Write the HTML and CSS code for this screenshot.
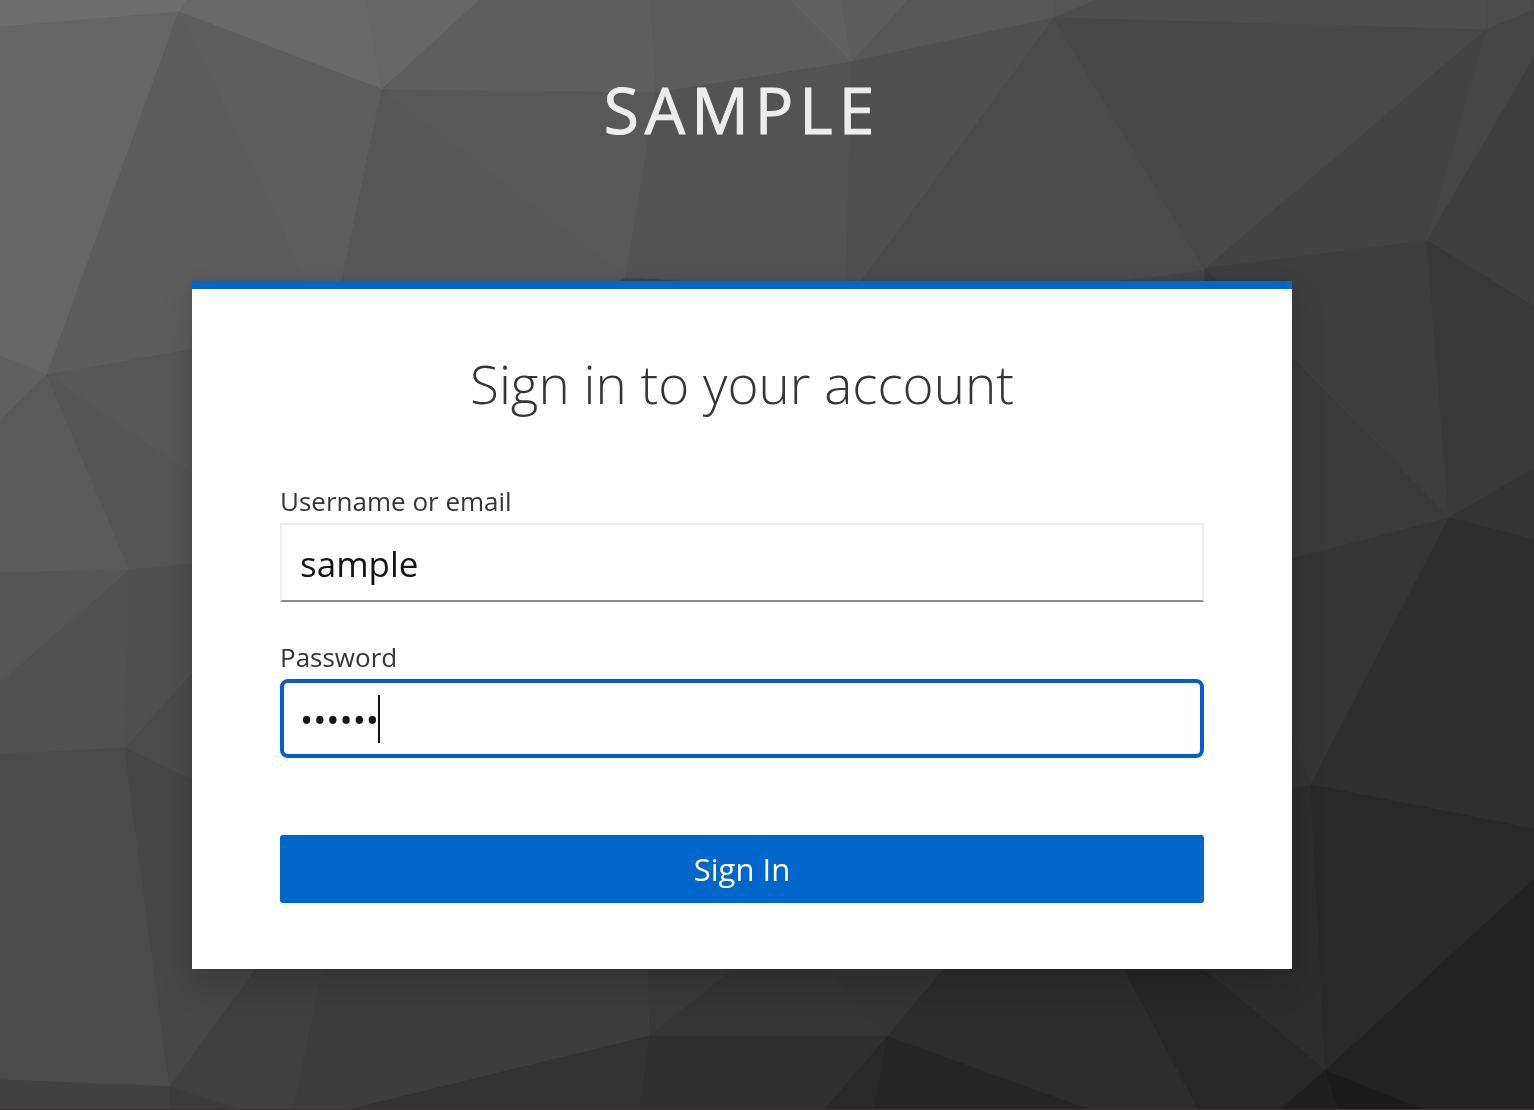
FILE: index.html
```html
<!DOCTYPE html>
<html lang="en">
<head>
<meta charset="utf-8">
<meta name="viewport" content="width=device-width, initial-scale=1">
<title>Sign in to your account</title>
<link rel="stylesheet" href="styles.css">
</head>
<body>
<svg class="mesh" viewBox="0 0 1534 1110" preserveAspectRatio="xMidYMid slice" aria-hidden="true">
  <!-- top edge -->
  <polygon color="#6e6e6e" points="0,0 187,0 179,12 0,27"/>
  <polygon color="#686868" points="187,0 366,0 382,89 179,12"/>
  <polygon color="#666666" points="366,0 480,0 382,89"/>
  <polygon color="#5f5f5f" points="480,0 651,0 656,93 382,90"/>
  <polygon color="#5c5c5c" points="651,0 790,0 852,62 656,93"/>
  <polygon color="#616161" points="790,0 841,0 852,62"/>
  <polygon color="#5d5d5d" points="841,0 909,0 852,62"/>
  <polygon color="#575757" points="909,0 1054,0 1054,18 852,62"/>
  <polygon color="#545454" points="1054,0 1097,0 1054,18"/>
  <polygon color="#4e4e4e" points="1097,0 1487,0 1486,30 1054,18"/>
  <polygon color="#4b4b4b" points="1487,0 1534,0 1534,10 1486,30"/>
  <!-- upper band -->
  <polygon color="#656565" points="0,27 179,12 47,375 0,356"/>
  <polygon color="#606060" points="0,356 47,375 0,421"/>
  <polygon color="#5d5d5d" points="179,12 310,290 310,328 47,375"/>
  <polygon color="#5e5e5e" points="179,12 382,90 340,290 310,290"/>
  <polygon color="#575757" points="382,90 626,277 600,290 340,290"/>
  <polygon color="#585858" points="382,90 656,93 626,277"/>
  <polygon color="#535353" points="656,93 852,62 846,290 626,277"/>
  <polygon color="#505050" points="852,62 1054,18 855,290 846,290"/>
  <polygon color="#4b4b4b" points="1054,18 1205,270 1100,283 1100,290 855,290"/>
  <polygon color="#484848" points="1054,18 1486,30 1205,269"/>
  <polygon color="#434343" points="1486,30 1427,241 1205,269"/>
  <polygon color="#454545" points="1486,30 1534,10 1534,58 1427,241"/>
  <polygon color="#3f3f3f" points="1427,241 1534,58 1534,307"/>
  <!-- left side -->
  <polygon color="#5a5a5a" points="0,421 47,375 130,570 0,573"/>
  <polygon color="#575757" points="47,375 210,347 210,487"/>
  <polygon color="#555555" points="47,375 210,487 210,562 130,570"/>
  <polygon color="#555555" points="0,573 130,570 0,683"/>
  <polygon color="#515151" points="130,570 125,748 0,755 0,683"/>
  <polygon color="#505050" points="130,570 210,562 210,654 125,748"/>
  <polygon color="#4b4b4b" points="125,748 210,654 210,789"/>
  <polygon color="#4b4b4b" points="0,755 125,748 170,1087 0,1080"/>
  <polygon color="#464646" points="125,748 210,789 270,950 170,1087"/>
  <!-- bottom edge -->
  <polygon color="#414141" points="0,1080 170,1087 171,1110 0,1110"/>
  <polygon color="#3c3c3c" points="170,1087 241,1110 171,1110"/>
  <polygon color="#404040" points="170,1087 270,950 327,950 294,1110 241,1110"/>
  <polygon color="#3d3d3d" points="327,950 648,950 650,1036 348,1110 294,1110"/>
  <polygon color="#393939" points="648,950 758,950 650,1036"/>
  <polygon color="#353535" points="758,950 810,950 888,1036 650,1036"/>
  <polygon color="#343434" points="810,950 960,950 888,1036"/>
  <polygon color="#333333" points="650,1036 640,1110 348,1110"/>
  <polygon color="#303030" points="650,1036 888,1036 824,1110 640,1110"/>
  <polygon color="#292929" points="888,1036 874,1110 824,1110"/>
  <polygon color="#252525" points="888,1036 1092,1110 874,1110"/>
  <polygon color="#2d2d2d" points="960,950 1114,950 1199,1110 1092,1110 888,1036"/>
  <polygon color="#272727" points="1114,950 1182,950 1326,1070 1280,1110 1199,1110"/>
  <polygon color="#1f1f1f" points="1326,1070 1339,1110 1280,1110"/>
  <polygon color="#1b1b1b" points="1326,1070 1425,1110 1339,1110"/>
  <!-- right side -->
  <polygon color="#3e3e3e" points="1205,269 1427,241 1449,518"/>
  <polygon color="#3a3a3a" points="1205,269 1449,518 1280,562 1205,562"/>
  <polygon color="#393939" points="1427,241 1534,307 1534,469 1449,518"/>
  <polygon color="#343434" points="1449,518 1534,469 1534,540"/>
  <polygon color="#353535" points="1449,518 1311,785 1280,711 1280,562"/>
  <polygon color="#333333" points="1311,785 1280,711 1280,791"/>
  <polygon color="#2f2f2f" points="1449,518 1534,540 1534,829 1311,785"/>
  <polygon color="#2d2d2d" points="1311,785 1326,1070 1182,950 1280,791"/>
  <polygon color="#292929" points="1311,785 1534,829 1534,879 1326,1070"/>
  <polygon color="#222222" points="1326,1070 1534,879 1534,1110 1425,1110"/>
</svg>
<div class="page">
  <header class="brand">SAMPLE</header>
  <main class="card">
    <h1 class="card-title">Sign in to your account</h1>
    <form class="form">
      <div class="field">
        <label class="label" for="username">Username or email</label>
        <input class="input" id="username" type="text" value="sample">
      </div>
      <div class="field">
        <label class="label" for="password">Password</label>
        <div class="control">
          <input class="input input-active" id="password" type="password" value="sample">
          <span class="caret" aria-hidden="true"></span>
        </div>
      </div>
      <button class="submit" type="submit">Sign In</button>
    </form>
  </main>
</div>
</body>
</html>
```
FILE: styles.css
```css
* {
  box-sizing: border-box;
}

body {
  margin: 0;
  background: #444;
  color: #363636;
  font-family: "Open Sans", "Noto Sans", sans-serif;
}

.mesh {
  position: fixed;
  inset: 0;
  z-index: -1;
  width: 100%;
  height: 100%;
}

.mesh polygon {
  fill: currentColor;
  stroke: currentColor;
  stroke-width: 1;
}

.page {
  display: flex;
  flex-direction: column;
  align-items: center;
  min-height: 100vh;
  padding: 66px 50px 64px 0;
  border-bottom: 1px solid #3a3038;
}

.brand {
  margin-bottom: 127px;
  color: #ededed;
  font-size: 64px;
  line-height: 88px;
  letter-spacing: 6px;
  -webkit-text-stroke: 1px #ededed;
}

.card {
  width: 100%;
  max-width: 1100px;
  padding: 57px 88px 66px;
  border-top: 8px solid #06c;
  background: #fff;
  box-shadow: 0 16px 32px rgba(3, 3, 3, 0.16), 0 0 12px rgba(3, 3, 3, 0.08);
}

.card-title {
  margin: 0 0 61px;
  font-size: 53px;
  font-weight: 300;
  line-height: 76px;
  text-align: center;
}

.form {
  display: flex;
  flex-direction: column;
  gap: 37px;
}

.field {
  display: flex;
  flex-direction: column;
  gap: 4px;
}

.label {
  font-size: 26px;
  line-height: 36px;
}

.control {
  position: relative;
}

.input {
  display: block;
  width: 100%;
  height: 79px;
  padding: 2px 18px 0;
  border: 2px solid #ededed;
  border-bottom-color: #8a8d90;
  border-radius: 0;
  outline: 0;
  background: #fff;
  color: #151515;
  font-family: inherit;
  font-size: 35px;
}

.input-active {
  padding: 2px 16px 0;
  border: 4px solid #005fcc;
  border-radius: 8px;
}

.caret {
  position: absolute;
  top: 16px;
  left: 98px;
  width: 2px;
  height: 48px;
  background: #151515;
}

.submit {
  height: 68px;
  margin-top: 40px;
  padding: 0 32px;
  border: 0;
  border-radius: 3px;
  background: #06c;
  color: #fff;
  font-family: inherit;
  font-size: 31px;
  line-height: 48px;
}
```
